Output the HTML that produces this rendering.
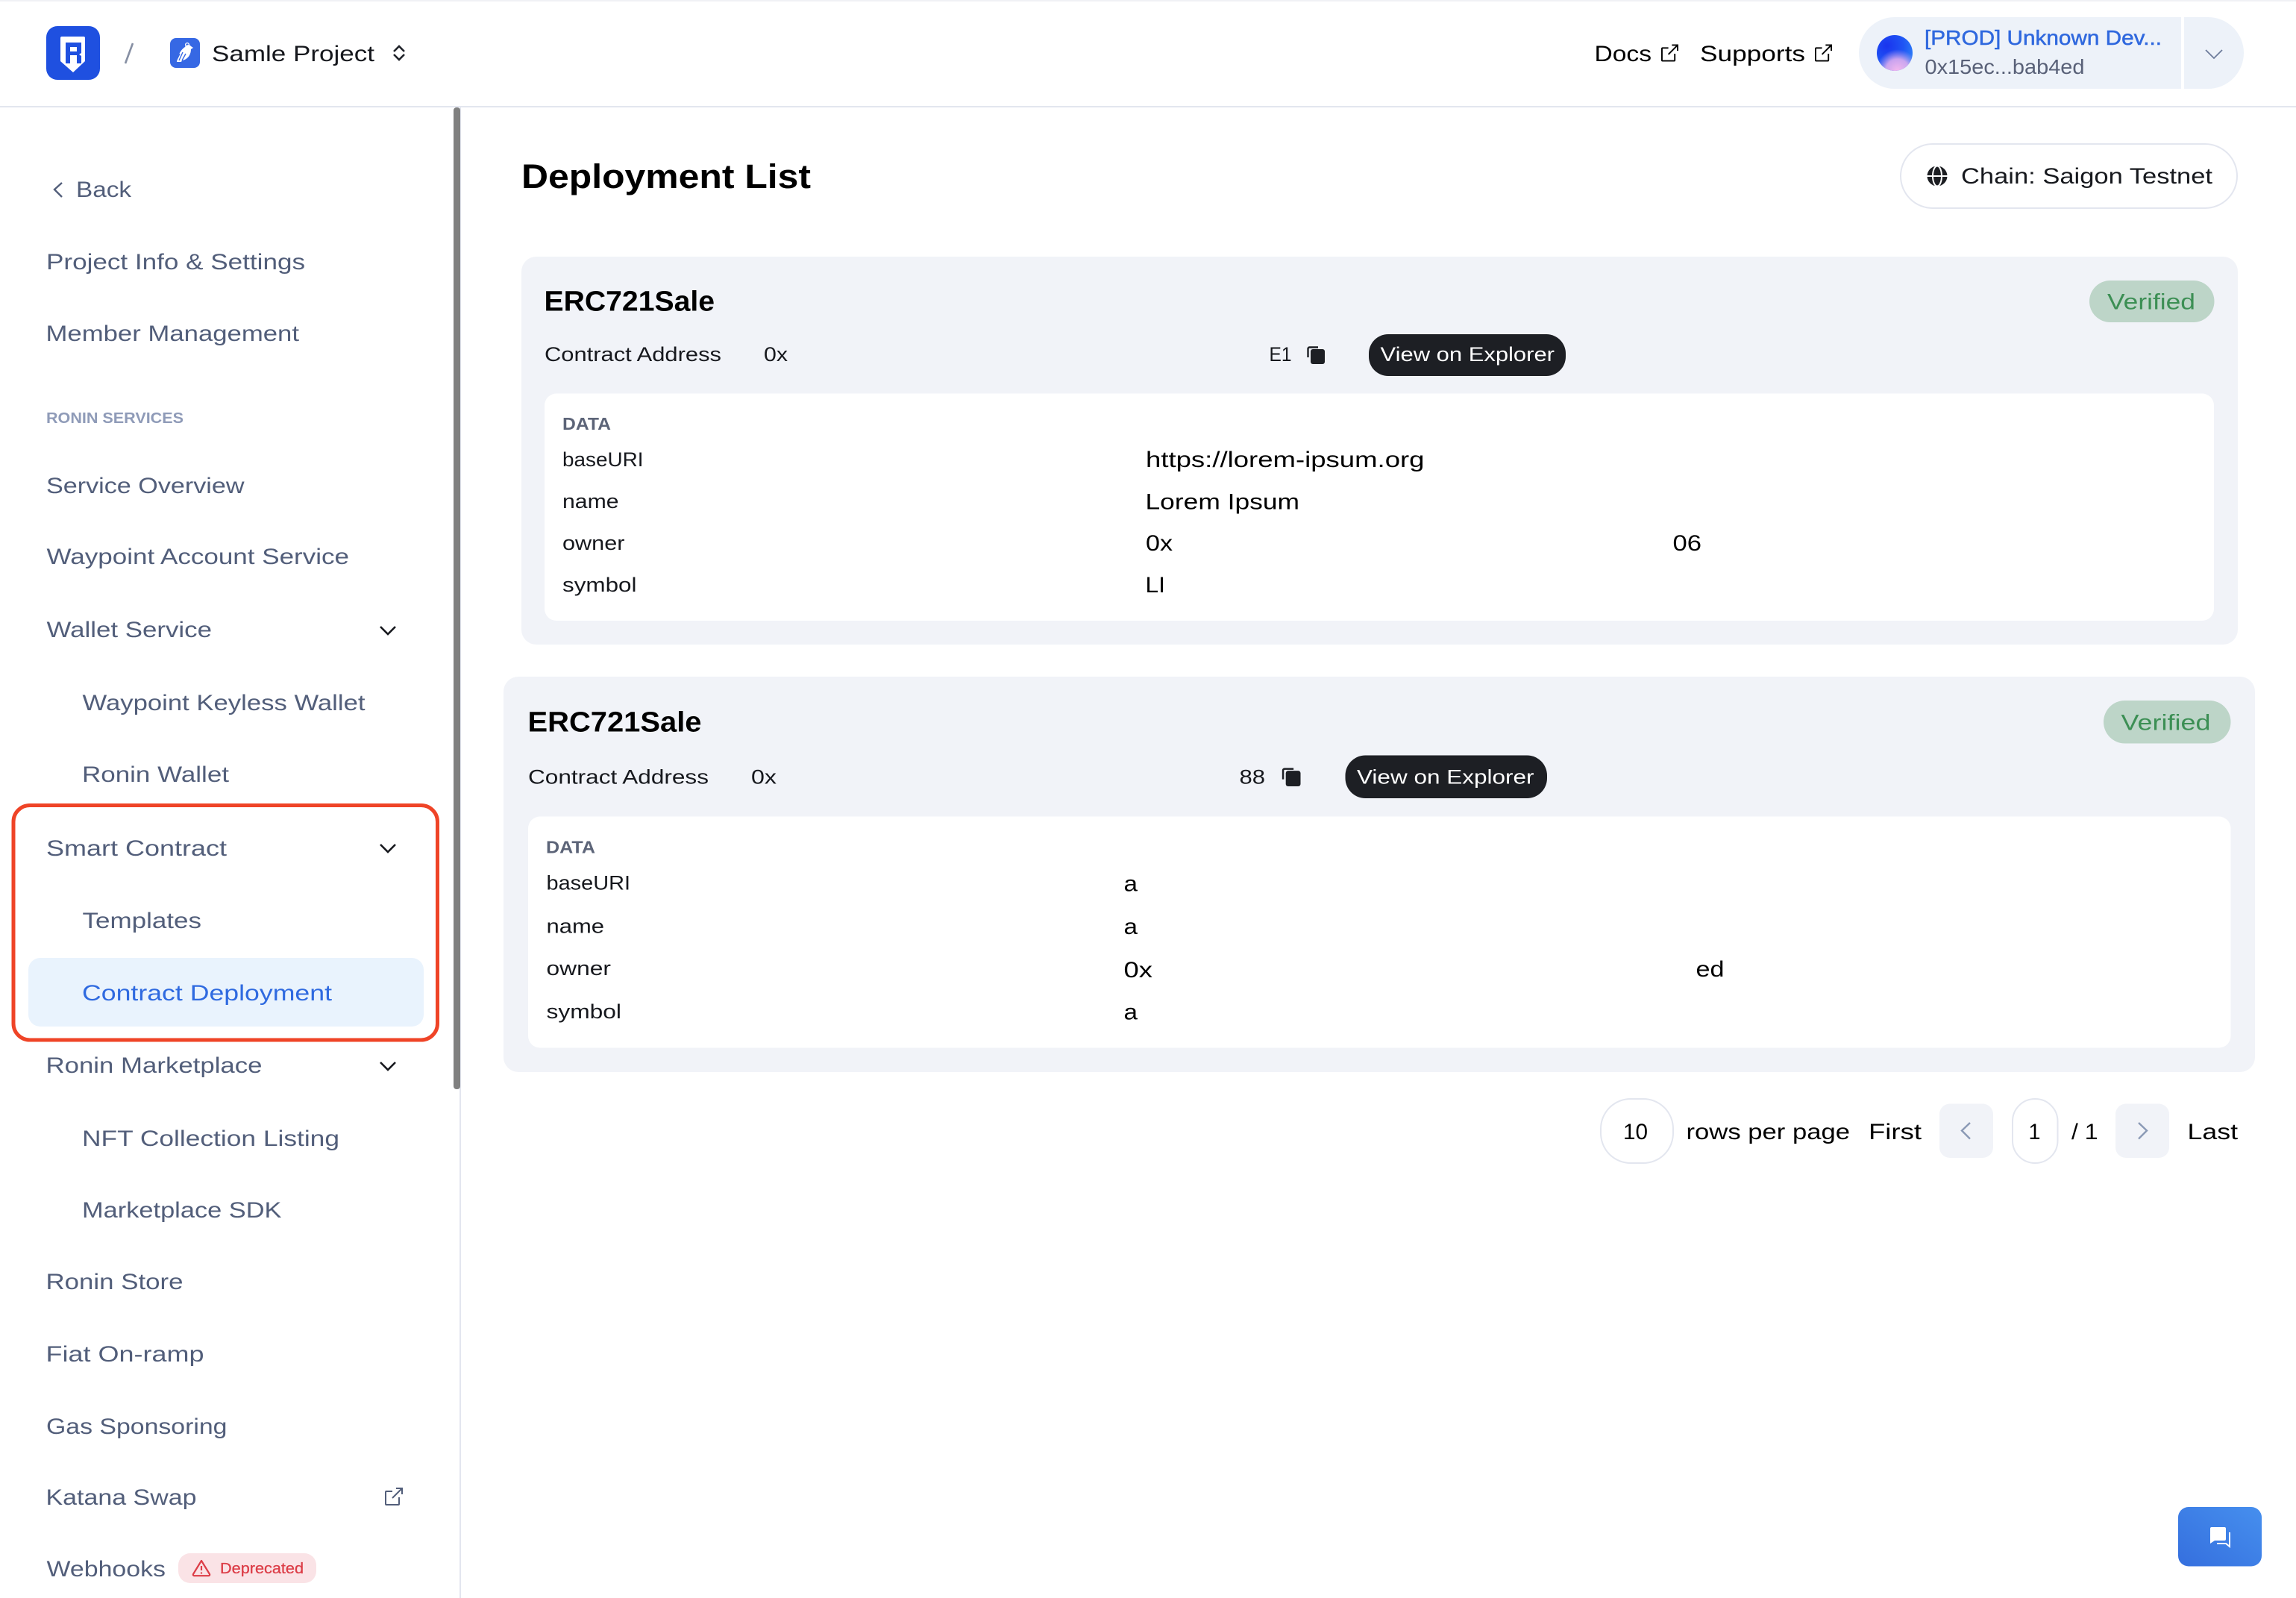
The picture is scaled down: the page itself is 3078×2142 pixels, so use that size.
<!DOCTYPE html>
<html lang="en">
<head>
<meta charset="utf-8">
<title>Deployment List</title>
<style>
html,body{margin:0;padding:0;background:#fff;width:3078px;height:2142px;overflow:hidden}
svg{display:block;position:absolute;left:0;top:0}
text{font-family:"Liberation Sans",Arial,sans-serif;white-space:pre}
.n{font-size:30px;fill:#525e7a}
.h{font-size:30px;fill:#16181d}
.k{font-size:26.5px;fill:#16181d}
.v{font-size:30px;fill:#000}
.t{font-size:38px;font-weight:700;fill:#000}
.d{font-size:23px;font-weight:700;fill:#5c6478}
.b{font-size:27px;fill:#fff}
.g{font-size:30px;fill:#3c8f54}
.p{font-size:30px;fill:#000}
</style>
</head>
<body>
<svg width="3078" height="2142" viewBox="0 0 3078 2142" xmlns="http://www.w3.org/2000/svg">
<defs>
<linearGradient id="chat" x1="0" y1="1" x2="1" y2="0"><stop offset="0" stop-color="#356fde"/><stop offset="1" stop-color="#468fee"/></linearGradient>
<radialGradient id="av1" cx="0.28" cy="0.3" r="0.85"><stop offset="0" stop-color="#1a34ee"/><stop offset="0.55" stop-color="#1f55f4"/><stop offset="1" stop-color="#2f86f8"/></radialGradient>
<radialGradient id="av2" cx="0.58" cy="1" r="0.6"><stop offset="0" stop-color="#f5b8ee"/><stop offset="0.55" stop-color="#e7b0ee" stop-opacity=".85"/><stop offset="1" stop-color="#c0a0f0" stop-opacity="0"/></radialGradient>
<symbol id="ext" viewBox="0 0 24 24"><path d="M10 5H2a1 1 0 0 0-1 1v16a1 1 0 0 0 1 1h16a1 1 0 0 0 1-1V13M10 14L23 1M15 1h8v8" fill="none" stroke="currentColor" stroke-width="2"/></symbol>
<symbol id="copy" viewBox="0 0 24 24"><path d="M1.500 15V3.500a2 2 0 0 1 2-2H15" fill="none" stroke="#1d1f24" stroke-width="2.400"/><rect x="5" y="4" width="19" height="20" rx="3" fill="#1d1f24"/></symbol>
</defs>

<!-- top bar -->
<rect x="0" y="0" width="3078" height="2" fill="#f0f1f5"/>
<rect x="0" y="142" width="3078" height="2" fill="#e3e6ef"/>
<rect x="62" y="35" width="72" height="72" rx="15" fill="#1f50e0"/>
<path d="M83 49h29a2 2 0 0 1 2 2v31L98 97 81 82V51a2 2 0 0 1 2-2z" fill="#fff"/>
<path fill-rule="evenodd" d="M88 57h21v14l-3 2 3 2v10h-6V74h-9v11h-6zM94 63v6h9v-6z" fill="#1f50e0"/>
<path d="M178 58l-10 27" stroke="#868fa3" stroke-width="2.600" fill="none"/>
<rect x="228" y="51" width="40" height="40" rx="8" fill="#3668e4"/>
<path d="M237 83c1-9 6-17 11-20 1-3 6-4 8-1l3 2-3 2c0 8-5 14-12 15l-1 2z" fill="#fff"/>
<path d="M240 81l5-11M244 81l5-9M236 82l5-10" stroke="#3668e4" stroke-width="1.400" fill="none"/>
<circle cx="251" cy="60" r="2.400" fill="none" stroke="#fff" stroke-width="1.300"/>
<text class="h" lengthAdjust="spacingAndGlyphs" x="284" y="82" textLength="218">Samle Project</text>
<path d="M528 69l7-7 7 7M528 73l7 7 7-7" fill="none" stroke="#20232a" stroke-width="2.600"/>

<text class="h" lengthAdjust="spacingAndGlyphs" style="fill:#000" x="2137.500" y="82" textLength="76.500">Docs</text>
<use href="#ext" x="2227" y="59" width="23" height="24" style="color:#000"/>
<text class="h" lengthAdjust="spacingAndGlyphs" style="fill:#000" x="2279" y="82" textLength="141">Supports</text>
<use href="#ext" x="2433" y="59" width="23" height="24" style="color:#000"/>

<path d="M2540 23H2924V119H2540A48 48 0 0 1 2540 23z" fill="#edf2f9"/>
<path d="M2928 23H2960A48 48 0 0 1 2960 119H2928z" fill="#edf2f9"/>
<circle cx="2540" cy="71" r="24" fill="url(#av1)"/>
<circle cx="2540" cy="71" r="24" fill="url(#av2)"/>
<text lengthAdjust="spacingAndGlyphs" x="2580" y="60" textLength="318" style="font-size:27.5px;font-weight:400;fill:#2f68de;stroke:#2f68de;stroke-width:.5px">[PROD] Unknown Dev...</text>
<text lengthAdjust="spacingAndGlyphs" x="2580.500" y="99" textLength="214" style="font-size:27.5px;fill:#596178">0x15ec...bab4ed</text>
<path d="M2957 67l11 11 11-11" fill="none" stroke="#6e7d9c" stroke-width="1.800"/>

<!-- sidebar -->
<rect x="616" y="144" width="2" height="1998" fill="#e3e6ef"/>
<rect x="608" y="144" width="9" height="1316" rx="4" fill="#808080"/>
<path d="M83 245l-10 9 10 10" fill="none" stroke="#525e7a" stroke-width="2.400"/>
<text class="n" lengthAdjust="spacingAndGlyphs" x="102" y="264" textLength="74">Back</text>
<text class="n" lengthAdjust="spacingAndGlyphs" x="62" y="361" textLength="347">Project Info &amp; Settings</text>
<text class="n" lengthAdjust="spacingAndGlyphs" x="61.500" y="457" textLength="339.500">Member Management</text>
<text lengthAdjust="spacingAndGlyphs" x="62" y="567" textLength="184" style="font-size:20.5px;font-weight:700;fill:#8f9bb8">RONIN SERVICES</text>
<text class="n" lengthAdjust="spacingAndGlyphs" x="62" y="661" textLength="265.500">Service Overview</text>
<text class="n" lengthAdjust="spacingAndGlyphs" x="62.500" y="756" textLength="405.500">Waypoint Account Service</text>
<text class="n" lengthAdjust="spacingAndGlyphs" x="62.500" y="854" textLength="221.500">Wallet Service</text>
<path d="M510 840l10 10 10-10" fill="none" stroke="#16181d" stroke-width="2.600"/>
<text class="n" lengthAdjust="spacingAndGlyphs" x="110.500" y="952" textLength="379">Waypoint Keyless Wallet</text>
<text class="n" lengthAdjust="spacingAndGlyphs" x="110" y="1048" textLength="197">Ronin Wallet</text>

<rect x="18" y="1079.500" width="568.500" height="314.500" rx="22" fill="none" stroke="#ef4427" stroke-width="5"/>
<text class="n" lengthAdjust="spacingAndGlyphs" x="62" y="1147" textLength="242">Smart Contract</text>
<path d="M510 1132l10 10 10-10" fill="none" stroke="#16181d" stroke-width="2.600"/>
<text class="n" lengthAdjust="spacingAndGlyphs" x="110.500" y="1244" textLength="159.500">Templates</text>
<rect x="38" y="1284" width="530" height="92" rx="16" fill="#e9f3fd"/>
<text class="n" lengthAdjust="spacingAndGlyphs" style="fill:#2f6ae0" x="110" y="1341" textLength="335">Contract Deployment</text>

<text class="n" lengthAdjust="spacingAndGlyphs" x="61.500" y="1438" textLength="290">Ronin Marketplace</text>
<path d="M510 1424l10 10 10-10" fill="none" stroke="#16181d" stroke-width="2.600"/>
<text class="n" lengthAdjust="spacingAndGlyphs" x="110" y="1536" textLength="345">NFT Collection Listing</text>
<text class="n" lengthAdjust="spacingAndGlyphs" x="110" y="1632" textLength="267.500">Marketplace SDK</text>
<text class="n" lengthAdjust="spacingAndGlyphs" x="61.500" y="1728" textLength="184">Ronin Store</text>
<text class="n" lengthAdjust="spacingAndGlyphs" x="61.500" y="1825" textLength="212">Fiat On-ramp</text>
<text class="n" lengthAdjust="spacingAndGlyphs" x="62" y="1922" textLength="242.500">Gas Sponsoring</text>
<text class="n" lengthAdjust="spacingAndGlyphs" x="61.500" y="2017" textLength="202">Katana Swap</text>
<use href="#ext" x="516" y="1994" width="24" height="24" style="color:#525e7a"/>
<text class="n" lengthAdjust="spacingAndGlyphs" x="62.500" y="2113" textLength="159.500">Webhooks</text>
<rect x="239" y="2082" width="185" height="40" rx="16" fill="#fae3e6"/>
<path d="M270 2092l11 18a1.500 1.500 0 0 1-1.300 2.200h-19.400a1.500 1.500 0 0 1-1.300-2.200z" fill="none" stroke="#dc3d47" stroke-width="2.200" stroke-linejoin="round"/>
<path d="M270 2099v6M270 2107.500v2" stroke="#dc3d47" stroke-width="2.200" fill="none"/>
<text lengthAdjust="spacingAndGlyphs" x="295" y="2109" textLength="112" style="font-size:20.5px;fill:#dc3d47;stroke:#dc3d47;stroke-width:.3px">Deprecated</text>

<!-- main -->
<text lengthAdjust="spacingAndGlyphs" x="699" y="252" textLength="388" style="font-size:45px;font-weight:700;fill:#000">Deployment List</text>
<rect x="2548" y="193" width="451" height="86" rx="43" fill="#fff" stroke="#e3e6ef" stroke-width="2"/>
<circle cx="2597" cy="236" r="13.500" fill="#1c1e22"/>
<ellipse cx="2597" cy="236" rx="6" ry="13.500" fill="none" stroke="#fff" stroke-width="2"/>
<path d="M2583.500 236h27" stroke="#fff" stroke-width="2"/>
<text class="h" lengthAdjust="spacingAndGlyphs" x="2629" y="246" textLength="337">Chain: Saigon Testnet</text>

<!-- card 1 -->
<rect x="699" y="344" width="2301" height="520" rx="20" fill="#f1f3f8"/>
<text class="t" lengthAdjust="spacingAndGlyphs" x="729.500" y="416.500" textLength="228.500">ERC721Sale</text>
<rect x="2801" y="376" width="167.500" height="56" rx="28" fill="#bdd5c8"/>
<text class="g" lengthAdjust="spacingAndGlyphs" x="2825" y="414.500" textLength="118">Verified</text>
<text class="k" lengthAdjust="spacingAndGlyphs" x="730" y="484" textLength="237">Contract Address</text>
<text class="k" lengthAdjust="spacingAndGlyphs" x="1024" y="484" textLength="32">0x</text>
<text class="k" lengthAdjust="spacingAndGlyphs" x="1701.500" y="484" textLength="30">E1</text>
<use href="#copy" x="1752" y="464" width="24" height="24"/>
<rect x="1835" y="448" width="264" height="56" rx="26" fill="#1d1f24"/>
<text class="b" lengthAdjust="spacingAndGlyphs" x="1850.500" y="484" textLength="233.500">View on Explorer</text>
<rect x="730" y="527.500" width="2238" height="304.500" rx="16" fill="#fff"/>
<text class="d" lengthAdjust="spacingAndGlyphs" x="754" y="576" textLength="65">DATA</text>
<text class="k" lengthAdjust="spacingAndGlyphs" x="754" y="625" textLength="108.500">baseURI</text>
<text class="k" lengthAdjust="spacingAndGlyphs" x="754" y="681" textLength="75.500">name</text>
<text class="k" lengthAdjust="spacingAndGlyphs" x="754" y="737" textLength="83.500">owner</text>
<text class="k" lengthAdjust="spacingAndGlyphs" x="754" y="793" textLength="99.500">symbol</text>
<text class="v" lengthAdjust="spacingAndGlyphs" x="1536" y="626" textLength="373.500">https://lorem-ipsum.org</text>
<text class="v" lengthAdjust="spacingAndGlyphs" x="1535.500" y="682.500" textLength="206.500">Lorem Ipsum</text>
<text class="v" lengthAdjust="spacingAndGlyphs" x="1536" y="738" textLength="36">0x</text>
<text class="v" lengthAdjust="spacingAndGlyphs" x="2242.500" y="738" textLength="38.500">06</text>
<text class="v" lengthAdjust="spacingAndGlyphs" x="1535.500" y="794" textLength="26.500">LI</text>

<!-- card 2 -->
<rect x="675" y="907" width="2348" height="530" rx="20" fill="#f1f3f8"/>
<text class="t" lengthAdjust="spacingAndGlyphs" x="707.500" y="980.500" textLength="233">ERC721Sale</text>
<rect x="2820" y="939" width="170.500" height="57.500" rx="28.700" fill="#bdd5c8"/>
<text class="g" lengthAdjust="spacingAndGlyphs" x="2843.500" y="978.500" textLength="120">Verified</text>
<text class="k" lengthAdjust="spacingAndGlyphs" x="708" y="1050.500" textLength="242">Contract Address</text>
<text class="k" lengthAdjust="spacingAndGlyphs" x="1007" y="1050.500" textLength="34">0x</text>
<text class="k" lengthAdjust="spacingAndGlyphs" x="1661.500" y="1050.500" textLength="34.500">88</text>
<use href="#copy" x="1718" y="1029" width="26" height="25"/>
<rect x="1803.500" y="1012.500" width="270.500" height="57.500" rx="27" fill="#1d1f24"/>
<text class="b" lengthAdjust="spacingAndGlyphs" x="1819" y="1050.500" textLength="237.500">View on Explorer</text>
<rect x="708" y="1094.500" width="2282.500" height="310" rx="16" fill="#fff"/>
<text class="d" lengthAdjust="spacingAndGlyphs" x="732" y="1143.500" textLength="66">DATA</text>
<text class="k" lengthAdjust="spacingAndGlyphs" x="732.500" y="1192.500" textLength="112.500">baseURI</text>
<text class="k" lengthAdjust="spacingAndGlyphs" x="732.500" y="1250.500" textLength="77.500">name</text>
<text class="k" lengthAdjust="spacingAndGlyphs" x="732.500" y="1307" textLength="86.500">owner</text>
<text class="k" lengthAdjust="spacingAndGlyphs" x="732.500" y="1365" textLength="100.500">symbol</text>
<text class="v" lengthAdjust="spacingAndGlyphs" x="1506.500" y="1194.500" textLength="18.500">a</text>
<text class="v" lengthAdjust="spacingAndGlyphs" x="1506.500" y="1252" textLength="18.500">a</text>
<text class="v" lengthAdjust="spacingAndGlyphs" x="1506.500" y="1310" textLength="38.500">0x</text>
<text class="v" lengthAdjust="spacingAndGlyphs" x="2273.500" y="1309" textLength="38">ed</text>
<text class="v" lengthAdjust="spacingAndGlyphs" x="1506.500" y="1366.500" textLength="18.500">a</text>

<!-- pagination -->
<rect x="2146" y="1473" width="97" height="86" rx="40" fill="#fff" stroke="#e3e6ef" stroke-width="2"/>
<text class="p" lengthAdjust="spacingAndGlyphs" x="2176" y="1527" textLength="33">10</text>
<text class="p" lengthAdjust="spacingAndGlyphs" x="2260.500" y="1527" textLength="219.500">rows per page</text>
<text class="p" lengthAdjust="spacingAndGlyphs" x="2505" y="1527" textLength="71">First</text>
<rect x="2600" y="1479.500" width="72" height="72.500" rx="14" fill="#f1f3f8"/>
<path d="M2641 1505l-11 10.500 11 11" fill="none" stroke="#8a99b5" stroke-width="2.400"/>
<rect x="2698" y="1473" width="60.500" height="86" rx="30" fill="#fff" stroke="#e3e6ef" stroke-width="2"/>
<text class="p" lengthAdjust="spacingAndGlyphs" x="2719.500" y="1527" textLength="16">1</text>
<text class="p" lengthAdjust="spacingAndGlyphs" x="2777" y="1527" textLength="35.500">/ 1</text>
<rect x="2836" y="1479.500" width="72" height="72.500" rx="14" fill="#f1f3f8"/>
<path d="M2867 1505l11 10.500-11 11" fill="none" stroke="#8a99b5" stroke-width="2.400"/>
<text class="p" lengthAdjust="spacingAndGlyphs" x="2932.500" y="1527" textLength="67.500">Last</text>

<!-- chat -->
<rect x="2920" y="2020" width="112" height="79.500" rx="14" fill="url(#chat)"/>
<path d="M2963 2049a2 2 0 0 1 2-2h17a2 2 0 0 1 2 2v14a2 2 0 0 1-2 2h-13l-6 4z" fill="#fff"/>
<path d="M2989 2054v19l-5-4h-12" fill="none" stroke="#fff" stroke-width="2"/>
</svg>
</body>
</html>
